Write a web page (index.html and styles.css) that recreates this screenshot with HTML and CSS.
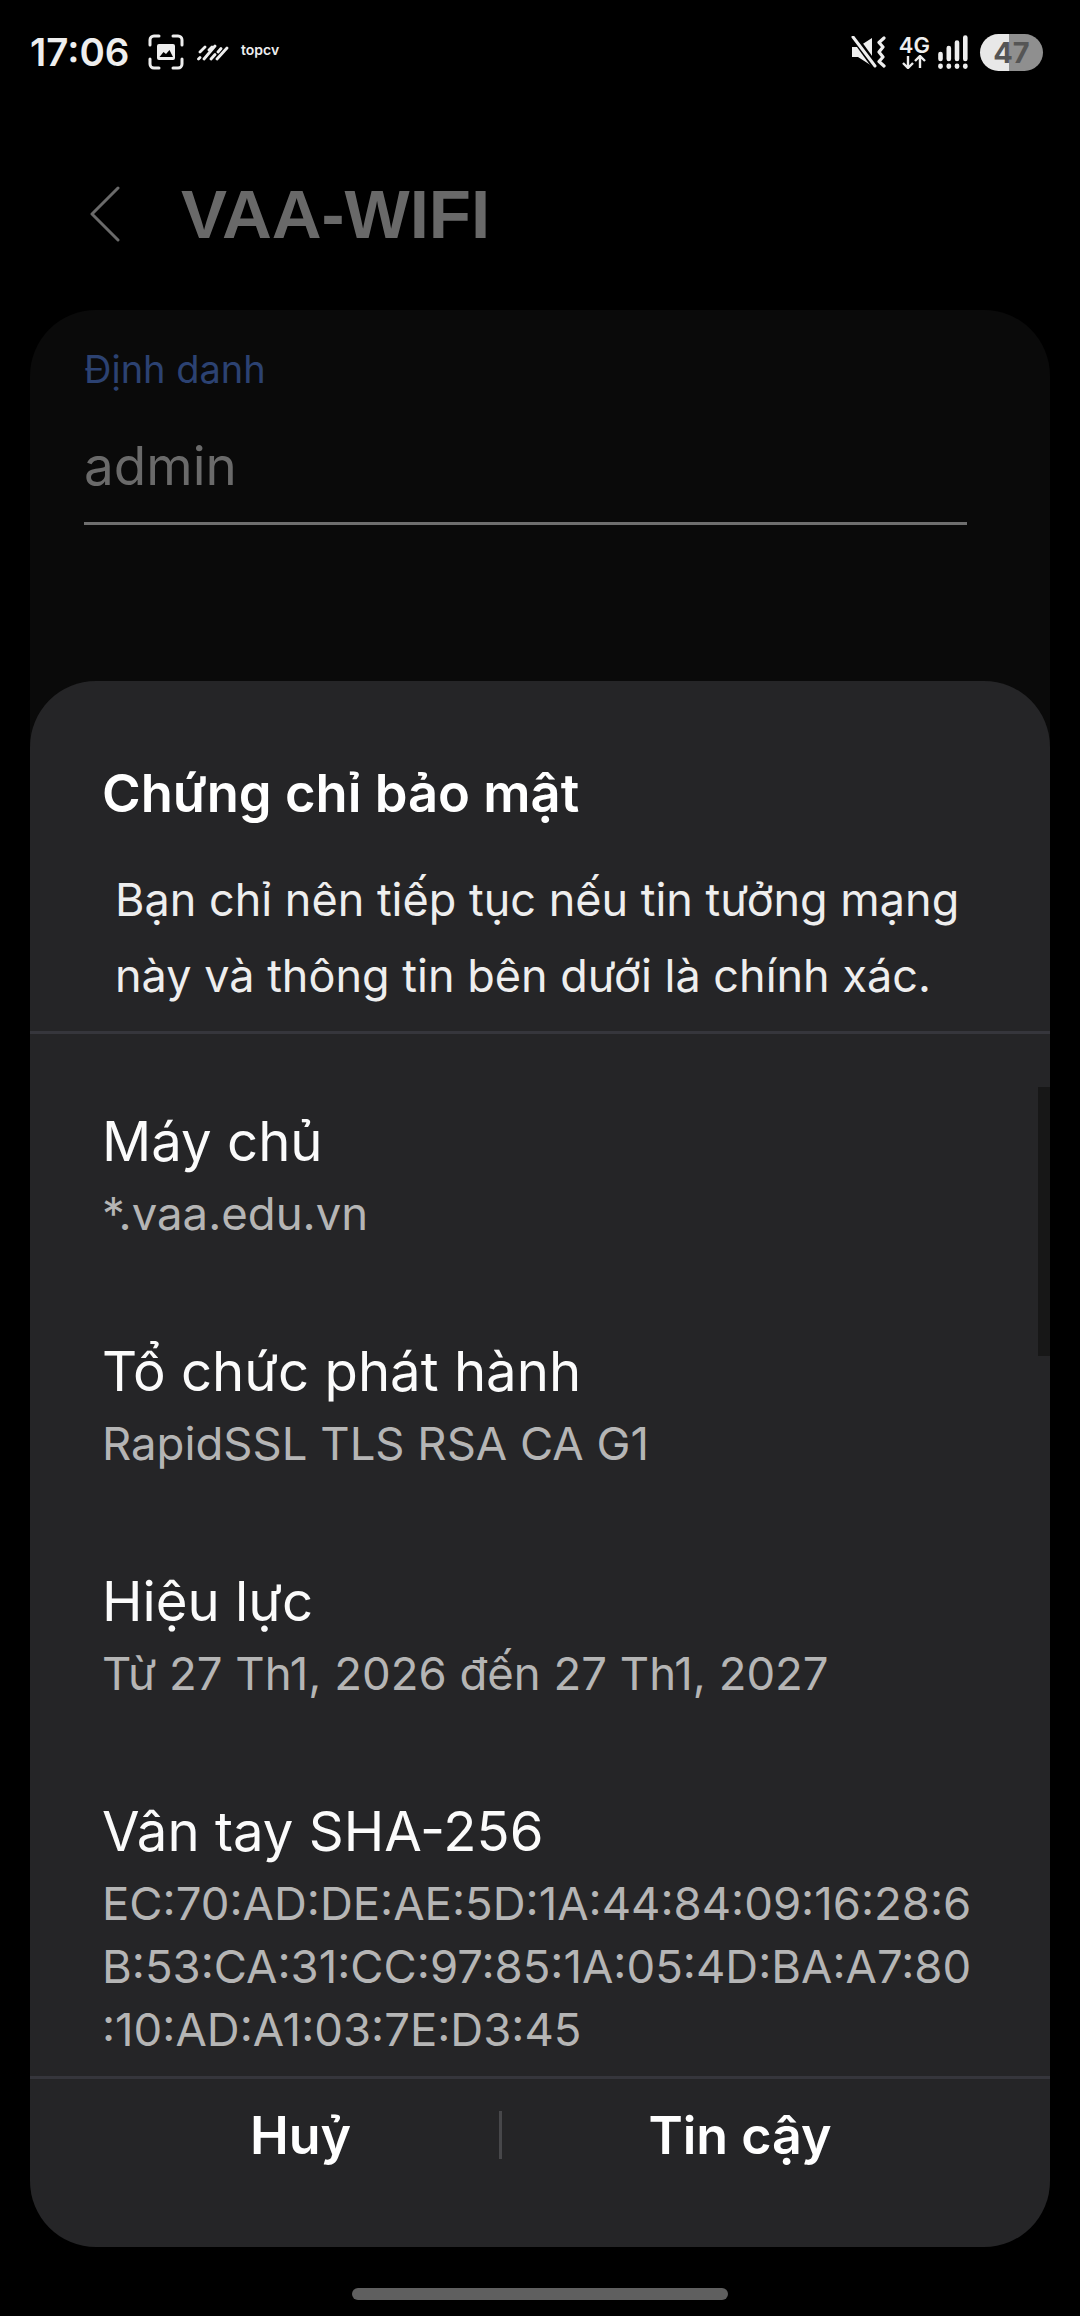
FILE: index.html
```html
<!DOCTYPE html>
<html lang="vi">
<head>
<title>VAA-WIFI</title>
<meta charset="utf-8">
<meta name="viewport" content="width=device-width, initial-scale=1, minimum-scale=1">
<link rel="stylesheet" href="styles.css">
</head>
<body>

<header class="status_bar">
  <span class="clock">17:06</span>
  <svg class="icon_shot" viewBox="0 0 36 36" width="36" height="36">
    <path d="M2 11V6a4 4 0 0 1 4-4h5M25 2h5a4 4 0 0 1 4 4v5M34 25v5a4 4 0 0 1-4 4h-5M11 34H6a4 4 0 0 1-4-4v-5" fill="none" stroke="#eee" stroke-width="3" stroke-linecap="round"/>
    <path d="M9 12a2 2 0 0 1 2-2h14a2 2 0 0 1 2 2v12a2 2 0 0 1-2 2H11a2 2 0 0 1-2-2z" fill="#eee"/>
    <path d="M11.500 23l4-5 2.500 2 3.500-4 3.500 7z" fill="#000"/>
  </svg>
  <svg class="icon_stripes" viewBox="0 0 32 18" width="32" height="18">
    <path d="M1.500 16l1.500-1.500M3 9l5-5M7 16L18 3M12 7l3-3M14 16l4-4.500M21 9l3-3.500M20 16l10-11" fill="none" stroke="#eee" stroke-width="2.800" stroke-linecap="round"/>
  </svg>
  <span class="topcv">topcv</span>
  <span class="status_right">
    <svg class="icon_mute" viewBox="0 0 36 32" width="36" height="32">
      <path d="M1 11h6L21 2v28L7 21H1z" fill="#eee"/>
      <path d="M3 1l21 29" stroke="#000" stroke-width="7"/>
      <path d="M2 1l22 29" stroke="#eee" stroke-width="3" stroke-linecap="round"/>
      <path d="M33 2l-5 4.500 4 4.500-4 5 4 5-4 4.500 5 4.500" fill="none" stroke="#eee" stroke-width="3.200" stroke-linecap="round" stroke-linejoin="round"/>
    </svg>
    <span class="net">
      <span class="net_label">4G</span>
      <svg viewBox="0 0 26 14" width="26" height="14">
        <path d="M7 1v12M2 8l5 5 5-5M19 13V1M14 6l5-5 5 5" fill="none" stroke="#eee" stroke-width="2.400"/>
      </svg>
    </span>
    <svg class="icon_signal" viewBox="0 0 30 34" width="30" height="34">
      <path d="M2.500 19v5M10.800 13v11M19 7.500v16.500M27.300 2.500v21.500" stroke="#eee" stroke-width="4.600" stroke-linecap="round"/>
      <path d="M2.500 31v.5M10.800 31v.5M19 31v.5M27.300 31v.5" stroke="#eee" stroke-width="4.800" stroke-linecap="round"/>
    </svg>
    <span class="battery"><span class="battery_num">47</span></span>
  </span>
</header>

<nav class="title_bar">
  <svg class="back" viewBox="0 0 30 56" width="30" height="56">
    <path d="M28 2L2 28l26 26" fill="none" stroke="#6a6a6a" stroke-width="3" stroke-linecap="round" stroke-linejoin="round"/>
  </svg>
  <h1>VAA-WIFI</h1>
</nav>

<section class="form_card">
  <label class="field_label">Định danh</label>
  <div class="field_value">admin</div>
</section>

<div class="dialog">
  <h2>Chứng chỉ bảo mật</h2>
  <p class="dialog_msg">Bạn chỉ nên tiếp tục nếu tin tưởng mạng<br>này và thông tin bên dưới là chính xác.</p>
  <div class="details">
    <div class="detail">
      <div class="detail_name">Máy chủ</div>
      <div class="detail_value">*.vaa.edu.vn</div>
    </div>
    <div class="detail">
      <div class="detail_name">Tổ chức phát hành</div>
      <div class="detail_value">RapidSSL TLS RSA CA G1</div>
    </div>
    <div class="detail">
      <div class="detail_name">Hiệu lực</div>
      <div class="detail_value">Từ 27 Th1, 2026 đến 27 Th1, 2027</div>
    </div>
    <div class="detail">
      <div class="detail_name">Vân tay SHA-256</div>
      <div class="detail_value">EC:70:AD:DE:AE:5D:1A:44:84:09:16:28:6<br>B:53:CA:31:CC:97:85:1A:05:4D:BA:A7:80<br>:10:AD:A1:03:7E:D3:45</div>
    </div>
    <div class="scroll_thumb"></div>
  </div>
  <div class="actions">
    <button class="action_cancel">Huỷ</button>
    <span class="actions_sep"></span>
    <button class="action_trust">Tin cậy</button>
  </div>
</div>

<div class="home_bar"></div>

</body>
</html>
```
FILE: styles.css
```css
html, body {
  margin: 0;
  height: 2316px;
  overflow: hidden;
  background: #000;
}
body {
  font-family: Inter, "Noto Sans", sans-serif;
  position: relative;
  color: #fff;
}
h1, h2, p {
  margin: 0;
}

/* status bar */
.status_bar {
  height: 104px;
  padding: 0 37px 0 30px;
  display: flex;
  align-items: center;
  color: #eee;
}
.clock {
  font-size: 38.500px;
  font-weight: 600;
  width: 118px;
}
.icon_stripes {
  margin-left: 13px;
}
.topcv {
  margin-left: 12px;
  margin-top: -6px;
  font-size: 14px;
  font-weight: 600;
}
.status_right {
  margin-left: auto;
  display: flex;
  align-items: center;
}
.net {
  margin-left: 12px;
  display: flex;
  flex-direction: column;
  align-items: center;
}
.net_label {
  font-size: 22px;
  line-height: 20px;
  font-weight: 600;
}
.icon_signal {
  margin-left: 8px;
}
.battery {
  margin-left: 12px;
  width: 63px;
  height: 37px;
  border-radius: 19px;
  background: linear-gradient(90deg, #e8e8e8 46%, #8f8f8f 46%);
  display: flex;
  align-items: center;
  justify-content: center;
}
.battery_num {
  color: #555;
  font-size: 29px;
  font-weight: 700;
}

/* page behind the dialog */
.title_bar {
  height: 120px;
  padding: 50px 0 0 90px;
  display: flex;
  align-items: center;
  gap: 61px;
}
.title_bar h1 {
  font-size: 69px;
  font-weight: 700;
  color: #696969;
  font-family: "Liberation Sans", sans-serif;
}
.form_card {
  margin: 36px 30px 0;
  height: 1800px;
  padding: 36px 55px 0 54px;
  background: #0a0a0a;
  border-radius: 66px;
}
.field_label {
  display: block;
  font-size: 38px;
  line-height: 46px;
  color: #2c4272;
}
.field_value {
  margin-right: 28px;
  margin-top: 38px;
  height: 92px;
  font-size: 53px;
  line-height: 72px;
  color: #6a6a6a;
  border-bottom: 3px solid #6f6f6f;
}

/* certificate dialog */
.dialog {
  position: absolute;
  left: 30px;
  top: 681px;
  width: 1020px;
  height: 1566px;
  background: #252527;
  border-radius: 66px;
  overflow: hidden;
  display: flex;
  flex-direction: column;
}
.dialog h2 {
  margin: 77px 0 0 72px;
  font-size: 52.500px;
  line-height: 70px;
  font-weight: 600;
}
.dialog_msg {
  margin: 34px 0 0 85px;
  font-size: 45px;
  line-height: 76px;
  color: #eee;
}
.details {
  position: relative;
  margin-top: 17px;
  flex: 1;
  overflow: hidden;
  border-top: 3px solid #36363c;
  border-bottom: 3px solid #36363c;
  padding-top: 76px;
}
.detail {
  padding: 0 40px 0 72px;
  margin-bottom: 95px;
}
.detail_name {
  font-size: 54.500px;
  line-height: 62px;
  color: #fbfbfb;
}
.detail_value {
  margin-top: 10px;
  font-size: 45.500px;
  line-height: 63px;
  color: #b5b5b5;
  white-space: nowrap;
}
.scroll_thumb {
  position: absolute;
  right: 0;
  top: 53px;
  width: 12px;
  height: 269px;
  background: #171717;
}
.actions {
  height: 112px;
  padding: 0 72px 56px;
  display: flex;
  align-items: center;
}
.actions button {
  background: none;
  border: 0;
  padding: 0;
  font: inherit;
  font-size: 52px;
  font-weight: 600;
  color: #fff;
}
.action_cancel {
  width: 397px;
}
.action_trust {
  flex: 1;
}
.actions_sep {
  width: 3px;
  height: 48px;
  background: #47474a;
}
.home_bar {
  position: absolute;
  left: 352px;
  top: 2288px;
  width: 376px;
  height: 12px;
  border-radius: 6px;
  background: #5f5f5f;
}
```
